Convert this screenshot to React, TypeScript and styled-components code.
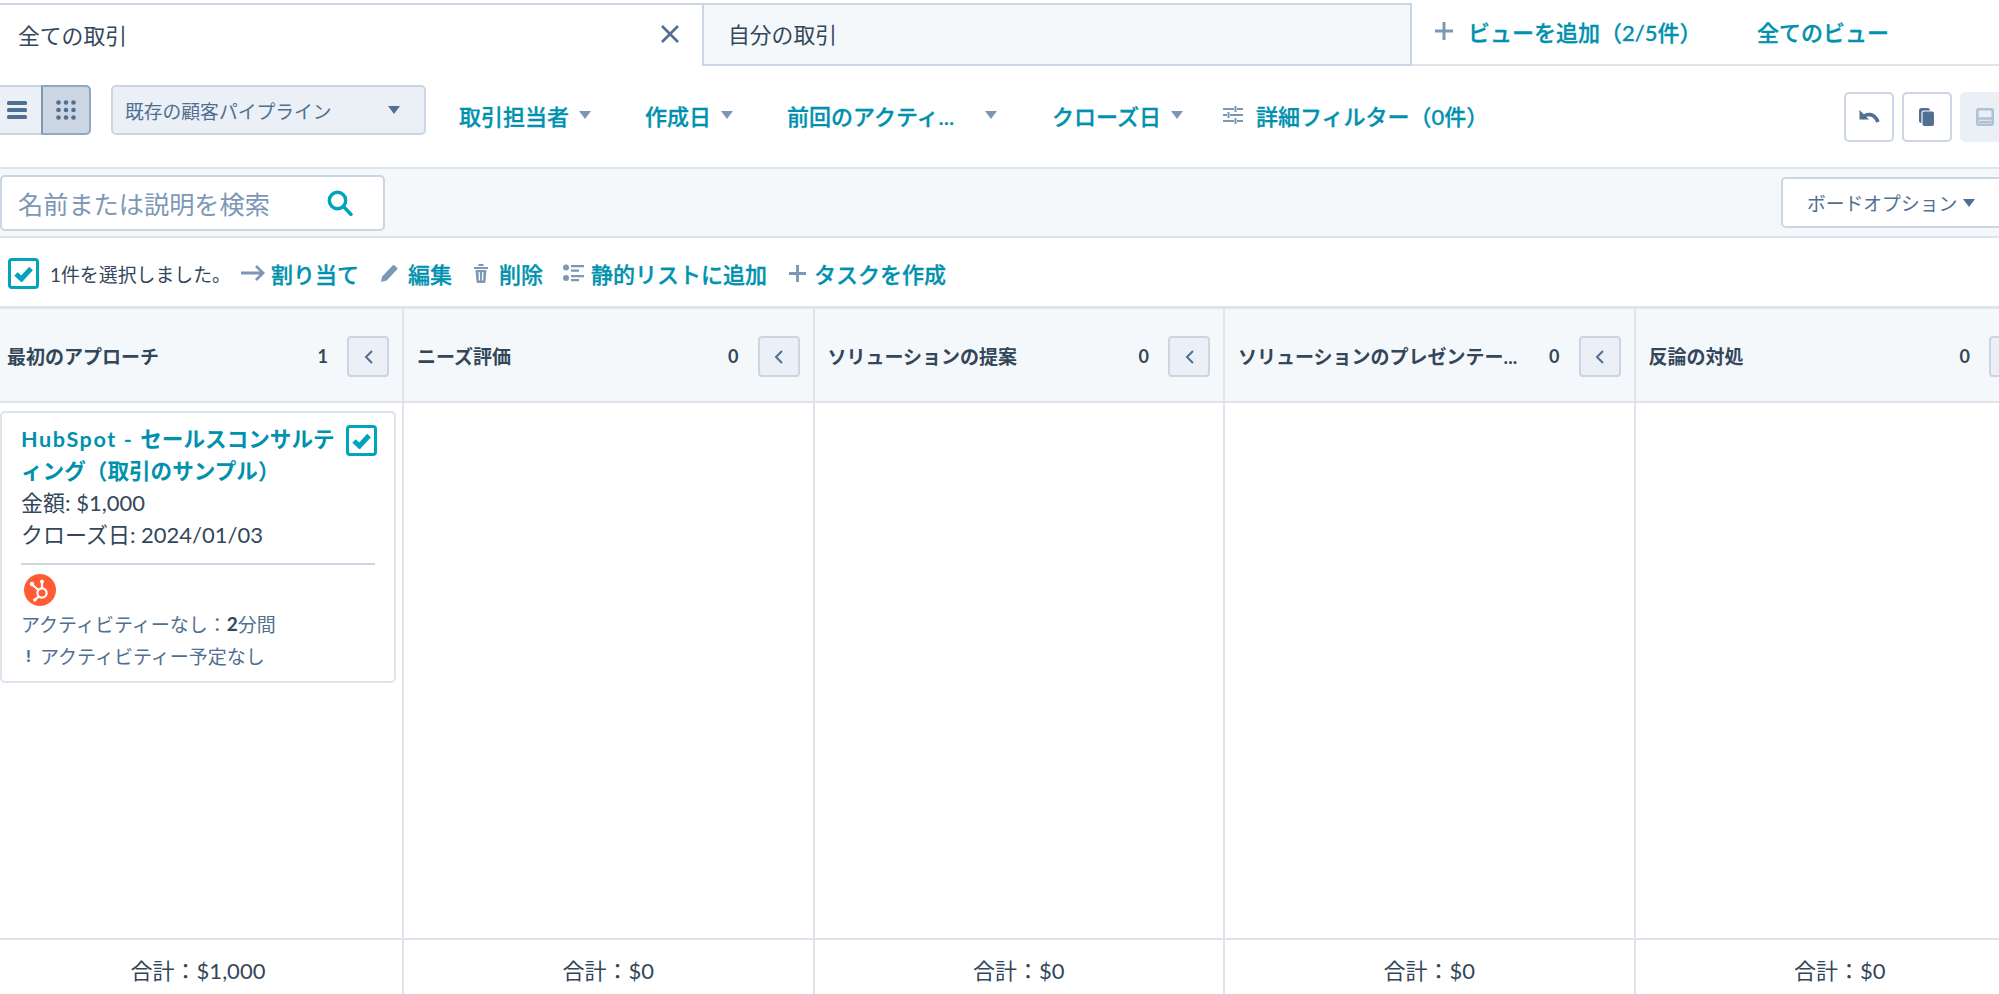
import React from "react";
import styled, { createGlobalStyle } from "styled-components";

const TEAL = "#0091ae";
const INK = "#33475b";
const LINE = "#dfe3eb";
const EDGE = "#cbd6e2";
const SLATE = "#516f90";
const MUTED = "#7c98b6";
const WASH = "#f5f8fa";
const CTRL = "#eaf0f6";

const Global = createGlobalStyle`
  html, body { margin: 0; padding: 0; height: 100%; background: #fff; overflow: hidden; }
  #root { height: 100%; }
  * { box-sizing: border-box; }
  body { font-family: "Lato", "Noto Sans CJK JP", sans-serif; color: ${INK}; }
`;

const Page = styled.div`
  height: 100vh;
  padding-top: 3px;
  display: flex;
  flex-direction: column;
  overflow: hidden;
`;

const TabsRow = styled.div`
  display: flex;
  height: 63px;
  flex: none;
`;

const Tab = styled.div<{ $active?: boolean }>`
  width: ${(p) => (p.$active ? "702px" : "710px")};
  display: flex;
  align-items: center;
  justify-content: space-between;
  padding: 0 16px 3px ${(p) => (p.$active ? "18px" : "24px")};
  font-size: 21.8px;
  color: ${INK};
  background: ${(p) => (p.$active ? "#fff" : WASH)};
  border-top: 2px solid ${EDGE};
  border-left: ${(p) => (p.$active ? "none" : `2px solid ${EDGE}`)};
  border-right: ${(p) => (p.$active ? "none" : `2px solid ${EDGE}`)};
  border-bottom: ${(p) => (p.$active ? "none" : `2px solid ${EDGE}`)};
`;

const TabClose = styled.svg`
  width: 20px;
  height: 20px;
  margin-right: 6px;
  stroke: ${SLATE};
  stroke-width: 2.6;
  fill: none;
`;

const TabActions = styled.div`
  flex: 1;
  display: flex;
  align-items: center;
  padding: 0 0 5px 22px;
  border-bottom: 2px solid ${LINE};
`;

const LinkText = styled.span<{ $size?: number }>`
  color: ${TEAL};
  font-size: ${(p) => p.$size ?? 22}px;
  font-weight: 500;
  white-space: nowrap;
  -webkit-text-stroke: 0.3px ${TEAL};
`;

const AddView = styled.div`
  display: flex;
  align-items: center;
  gap: 14px;
  width: 323px;
`;

const PlusIcon = styled.svg<{ $size?: number }>`
  width: ${(p) => p.$size ?? 20}px;
  height: ${(p) => p.$size ?? 20}px;
  stroke: ${MUTED};
  stroke-width: 3;
  flex: none;
`;

const FilterRow = styled.div`
  display: flex;
  align-items: center;
  height: 103px;
  flex: none;
  border-bottom: 2px solid ${LINE};
`;

const ViewToggle = styled.div`
  display: flex;
  height: 50px;
  margin: 0 20px 13px -9px;
  flex: none;
`;

const ToggleCell = styled.div<{ $on?: boolean }>`
  width: 50px;
  display: flex;
  align-items: center;
  justify-content: center;
  background: ${(p) => (p.$on ? EDGE : CTRL)};
  border: 2px solid ${(p) => (p.$on ? "#8fa8c4" : EDGE)};
  border-left-color: ${(p) => (p.$on ? "#7c98b6" : EDGE)};
  border-right: ${(p) => (p.$on ? undefined : "none")};
  border-radius: ${(p) => (p.$on ? "0 5px 5px 0" : "5px 0 0 5px")};
`;

const PipelineSelect = styled.div`
  width: 315px;
  height: 50px;
  margin: 0 33px 13px 0;
  flex: none;
  display: flex;
  align-items: center;
  justify-content: space-between;
  padding: 0 24px 0 12px;
  font-size: 18.8px;
  color: ${SLATE};
  background: ${CTRL};
  border: 2px solid ${EDGE};
  border-radius: 5px;
`;

const Caret = styled.svg<{ $color?: string }>`
  width: 12px;
  height: 8px;
  flex: none;
  fill: ${(p) => p.$color ?? MUTED};
`;

const FilterButton = styled.div<{ $width?: number; $gap?: number }>`
  width: ${(p) => (p.$width ? `${p.$width}px` : "auto")};
  flex: none;
  display: flex;
  align-items: center;
  gap: ${(p) => p.$gap ?? 10}px;
  margin-bottom: 3px;
`;

const FiltersIcon = styled.svg`
  width: 20px;
  height: 18px;
  flex: none;
  stroke: ${MUTED};
  stroke-width: 2;
  fill: none;
`;

const RightTools = styled.div`
  margin: 1px -11px 0 auto;
  display: flex;
  gap: 8px;
  flex: none;
`;

const ToolButton = styled.div<{ $disabled?: boolean }>`
  width: 50px;
  height: 50px;
  display: flex;
  align-items: center;
  justify-content: center;
  border-radius: 5px;
  background: ${(p) => (p.$disabled ? CTRL : "#fff")};
  border: 2px solid ${(p) => (p.$disabled ? CTRL : EDGE)};
`;

const SearchBand = styled.div`
  height: 69px;
  flex: none;
  display: flex;
  align-items: center;
  justify-content: space-between;
  background: ${WASH};
  border-bottom: 2px solid ${LINE};
`;

const SearchBox = styled.div`
  width: 385px;
  height: 56px;
  display: flex;
  align-items: center;
  justify-content: space-between;
  padding: 0 30px 0 16px;
  font-size: 25.2px;
  color: ${MUTED};
  background: #fff;
  border: 2px solid ${EDGE};
  border-radius: 5px;
`;

const BoardOptions = styled.div`
  width: 240px;
  height: 51px;
  flex: none;
  margin-right: -22px;
  display: flex;
  align-items: center;
  gap: 6px;
  padding-left: 24px;
  font-size: 18.8px;
  color: ${SLATE};
  background: #fff;
  border: 2px solid ${EDGE};
  border-radius: 5px;
`;

const ActionsRow = styled.div`
  height: 71px;
  flex: none;
  display: flex;
  align-items: center;
  padding: 2px 0 0 8px;
  border-bottom: 3px solid ${LINE};
`;

const CheckBox = styled.div<{ $floating?: boolean }>`
  width: 31px;
  height: 31px;
  flex: none;
  display: flex;
  align-items: center;
  justify-content: center;
  background: #fff;
  border: 3px solid #00a4bd;
  border-radius: 4px;
  ${(p) => p.$floating && "position: absolute; top: 12px; right: 17px;"}
`;

const SelectedNote = styled.span`
  width: 202px;
  flex: none;
  padding-left: 11px;
  font-size: 18.9px;
  color: ${INK};
  white-space: nowrap;
`;

const ActionItem = styled.div<{ $gap: number; $after?: number }>`
  display: flex;
  align-items: center;
  gap: ${(p) => p.$gap}px;
  margin-right: ${(p) => p.$after ?? 0}px;
  flex: none;
`;

const Board = styled.div`
  flex: 1;
  min-height: 0;
  display: grid;
  grid-template-columns: 404px repeat(4, 410.5px);
  overflow: hidden;
`;

const Column = styled.section`
  display: flex;
  flex-direction: column;
  min-height: 0;
  border-right: 2px solid ${LINE};
`;

const ColumnHeader = styled.header<{ $first?: boolean }>`
  height: 94px;
  flex: none;
  display: flex;
  align-items: center;
  padding: 3px 13px 0 ${(p) => (p.$first ? 7 : 13)}px;
  background: ${WASH};
  border-bottom: 2px solid ${LINE};
`;

const ColumnTitle = styled.h2`
  flex: 1;
  min-width: 0;
  margin: 0 0 2px;
  font-size: 19px;
  font-weight: 700;
  color: ${INK};
  white-space: nowrap;
`;

const ColumnCount = styled.span`
  margin: 0 19px 2px 0;
  font-size: 18px;
  font-weight: 700;
`;

const CollapseButton = styled.div`
  width: 42px;
  height: 41px;
  flex: none;
  display: flex;
  align-items: center;
  justify-content: center;
  background: ${CTRL};
  border: 2px solid ${EDGE};
  border-radius: 4px;
`;

const ColumnBody = styled.div`
  flex: 1;
  min-height: 0;
  padding-top: 8px;
`;

const ColumnFooter = styled.footer<{ $first?: boolean }>`
  height: 56px;
  flex: none;
  display: flex;
  align-items: center;
  justify-content: center;
  padding: 4px ${(p) => (p.$first ? 6 : 0)}px 0 0;
  font-size: 22px;
  color: ${INK};
  border-top: 2px solid ${LINE};
`;

const DealCard = styled.article`
  position: relative;
  width: 396px;
  height: 272px;
  padding: 11px 19px 0 19px;
  background: #fff;
  border: 2px solid ${LINE};
  border-radius: 5px;
`;

const DealTitle = styled.a`
  display: block;
  width: 322px;
  font-size: 21.6px;
  line-height: 31.5px;
  font-weight: 700;
  color: ${TEAL};
  line-break: anywhere;
`;

const LatinPart = styled.span`
  letter-spacing: 1.6px;
`;

const DealLine = styled.div`
  font-size: 22px;
  line-height: 31.5px;
  color: ${INK};
`;

const DealDivider = styled.hr`
  margin: 13px 0 9px;
  border: 0;
  border-top: 2px solid ${EDGE};
`;

const OwnerAvatar = styled.svg`
  display: block;
  width: 32px;
  height: 32px;
  margin: 0 0 1px 3px;
`;

const MetaLine = styled.div`
  display: flex;
  align-items: center;
  height: 32px;
  font-size: 19px;
  color: ${SLATE};
  white-space: nowrap;
`;

const MetaStrong = styled.strong`
  font-weight: 700;
  color: ${INK};
`;

const Alert = styled.span`
  width: 19px;
  padding-left: 5px;
  font-size: 17px;
  font-weight: 900;
  color: ${SLATE};
`;

const GlyphSvg = styled.svg<{ $w: number; $h: number }>`
  width: ${(p) => p.$w}px;
  height: ${(p) => p.$h}px;
  flex: none;
`;

const CaretGlyph = ({ color }: { color?: string }) => (
  <Caret viewBox="0 0 12 8" $color={color}>
    <path d="M0 0h12L6 8z" />
  </Caret>
);

const Check = () => (
  <GlyphSvg $w={21} $h={17} viewBox="0 0 21 17">
    <path d="M3 9l5.500 5L18 3.500" fill="none" stroke="#00a4bd" strokeWidth="5" />
  </GlyphSvg>
);

const Plus = ({ size }: { size?: number }) => (
  <PlusIcon $size={size} viewBox="0 0 20 20">
    <path d="M10 1v18M1 10h18" />
  </PlusIcon>
);

const columns = [
  { title: "最初のアプローチ", count: 1, total: "$1,000" },
  { title: "ニーズ評価", count: 0, total: "$0" },
  { title: "ソリューションの提案", count: 0, total: "$0" },
  { title: "ソリューションのプレゼンテー...", count: 0, total: "$0" },
  { title: "反論の対処", count: 0, total: "$0" },
];

const filters = [
  { label: "取引担当者", width: 186 },
  { label: "作成日", width: 142 },
  { label: "前回のアクティ...", width: 265, gap: 31 },
  { label: "クローズ日", width: 171 },
];

export default function App() {
  return (
    <Page>
      <Global />
      <TabsRow>
        <Tab $active>
          全ての取引
          <TabClose viewBox="0 0 20 20">
            <path d="M2 2l16 16M18 2L2 18" />
          </TabClose>
        </Tab>
        <Tab>自分の取引</Tab>
        <TabActions>
          <AddView>
            <Plus />
            <LinkText>ビューを追加（2/5件）</LinkText>
          </AddView>
          <LinkText>全てのビュー</LinkText>
        </TabActions>
      </TabsRow>

      <FilterRow>
        <ViewToggle>
          <ToggleCell>
            <GlyphSvg $w={20} $h={18} viewBox="0 0 20 18" fill={SLATE}>
              <rect width="20" height="4" y="0" rx="1.5" />
              <rect width="20" height="4" y="7" rx="1.5" />
              <rect width="20" height="4" y="14" rx="1.5" />
            </GlyphSvg>
          </ToggleCell>
          <ToggleCell $on>
            <GlyphSvg $w={20} $h={20} viewBox="0 0 20 20" fill={SLATE}>
              {[2.5, 10, 17.5].flatMap((y) =>
                [2.5, 10, 17.5].map((x) => <circle key={`${x}-${y}`} cx={x} cy={y} r="2.3" />)
              )}
            </GlyphSvg>
          </ToggleCell>
        </ViewToggle>
        <PipelineSelect>
          既存の顧客パイプライン
          <CaretGlyph color={SLATE} />
        </PipelineSelect>
        {filters.map((f) => (
          <FilterButton key={f.label} $width={f.width} $gap={f.gap}>
            <LinkText>{f.label}</LinkText>
            <CaretGlyph />
          </FilterButton>
        ))}
        <FilterButton $gap={13}>
          <FiltersIcon viewBox="0 0 20 18">
            <path d="M0 3h11M14 3h6M12.500 0v6M0 9h4M7 9h13M5.500 6v6M0 15h11M14 15h6M12.500 12v6" />
          </FiltersIcon>
          <LinkText>詳細フィルター（0件）</LinkText>
        </FilterButton>
        <RightTools>
          <ToolButton>
            <GlyphSvg $w={22} $h={14} viewBox="0 0 22 14" fill="none">
              <path d="M1.500 0v9.500H11" fill={SLATE} />
              <path d="M4 8.500C8 3 16 2.500 20 12" stroke={SLATE} strokeWidth="3.600" />
            </GlyphSvg>
          </ToolButton>
          <ToolButton>
            <GlyphSvg $w={16} $h={19} viewBox="0 0 16 19">
              <rect x="0" y="0" width="11" height="15" rx="2.500" fill={SLATE} />
              <rect x="3" y="3" width="12.500" height="15.500" rx="2.200" fill={SLATE} stroke="#fff" strokeWidth="1.100" />
            </GlyphSvg>
          </ToolButton>
          <ToolButton $disabled>
            <GlyphSvg $w={18} $h={18} viewBox="0 0 18 18" fill="none" stroke="#b0c1d4" strokeWidth="2.600">
              <rect x="1.300" y="1.300" width="15.400" height="15.400" rx="1.500" />
              <path d="M1 10.500h16M3 14h12" />
            </GlyphSvg>
          </ToolButton>
        </RightTools>
      </FilterRow>

      <SearchBand>
        <SearchBox>
          名前または説明を検索
          <GlyphSvg $w={26} $h={26} viewBox="0 0 26 26" fill="none" stroke="#00a4bd" strokeWidth="3.400">
            <circle cx="10.500" cy="10.500" r="8.200" />
            <path d="M16.500 16.500L24 24.500" strokeLinecap="round" />
          </GlyphSvg>
        </SearchBox>
        <BoardOptions>
          ボードオプション
          <CaretGlyph color={SLATE} />
        </BoardOptions>
      </SearchBand>

      <ActionsRow>
        <CheckBox>
          <Check />
        </CheckBox>
        <SelectedNote>1件を選択しました。</SelectedNote>
        <ActionItem $gap={6} $after={22}>
          <GlyphSvg $w={24} $h={16} viewBox="0 0 24 16" fill="none" stroke={MUTED} strokeWidth="2.800">
            <path d="M0 8h22M15 1l7 7-7 7" />
          </GlyphSvg>
          <LinkText>割り当て</LinkText>
        </ActionItem>
        <ActionItem $gap={10} $after={22}>
          <GlyphSvg $w={17} $h={18} viewBox="0 0 17 18" fill={MUTED}>
            <path d="M0 18l1.200-5.500L11.500 1.500a1.600 1.600 0 0 1 2.200-.1l2.200 2a1.600 1.600 0 0 1 .1 2.200L5.700 16.400z" />
          </GlyphSvg>
          <LinkText>編集</LinkText>
        </ActionItem>
        <ActionItem $gap={11} $after={20}>
          <GlyphSvg $w={14} $h={19} viewBox="0 0 14 19" fill={MUTED}>
            <path d="M0 3h14v2H0zM4.500 0h5v2h-5z" />
            <path d="M1.500 6h11l-1 11.500a1.500 1.500 0 0 1-1.500 1.500H4a1.500 1.500 0 0 1-1.500-1.500zM4.500 8l.4 8.500h1.200L5.800 8zm3.700 0l-.3 8.500h1.200L9.500 8z" fillRule="evenodd" />
          </GlyphSvg>
          <LinkText>削除</LinkText>
        </ActionItem>
        <ActionItem $gap={7} $after={21}>
          <GlyphSvg $w={21} $h={18} viewBox="0 0 21 18" fill={MUTED}>
            <circle cx="3" cy="3.500" r="3" />
            <circle cx="3" cy="14" r="3" />
            <path d="M8 1h13v2.200H8zM8 5.500h8v2.200H8zM8 11h13v2.200H8zM8 15h8v2.200H8z" />
          </GlyphSvg>
          <LinkText>静的リストに追加</LinkText>
        </ActionItem>
        <ActionItem $gap={7}>
          <Plus size={19} />
          <LinkText>タスクを作成</LinkText>
        </ActionItem>
      </ActionsRow>

      <Board>
        {columns.map((c, i) => (
          <Column key={c.title}>
            <ColumnHeader $first={i === 0}>
              <ColumnTitle>{c.title}</ColumnTitle>
              <ColumnCount>{c.count}</ColumnCount>
              <CollapseButton>
                <GlyphSvg $w={9} $h={14} viewBox="0 0 9 14" fill="none" stroke={SLATE} strokeWidth="2">
                  <path d="M8 1L2 7l6 6" />
                </GlyphSvg>
              </CollapseButton>
            </ColumnHeader>
            <ColumnBody>
              {i === 0 && (
                <DealCard>
                  <CheckBox $floating>
                    <Check />
                  </CheckBox>
                  <DealTitle>
                    <LatinPart>HubSpot - </LatinPart>セールスコンサルティング（取引のサンプル）
                  </DealTitle>
                  <DealLine>金額: $1,000</DealLine>
                  <DealLine>クローズ日: 2024/01/03</DealLine>
                  <DealDivider />
                  <OwnerAvatar viewBox="0 0 32 32">
                    <circle cx="16" cy="16" r="16" fill="#ff5c35" />
                    <g fill="none" stroke="#fff" strokeWidth="2.200">
                      <circle cx="18" cy="19" r="4.600" />
                      <path d="M18 14V8.500M14.500 16L8.500 11M14.800 22.500l-3.500 3" />
                    </g>
                    <circle cx="18" cy="7.500" r="2" fill="#fff" />
                    <circle cx="8" cy="10" r="2.200" fill="#fff" />
                    <circle cx="10.800" cy="26" r="1.700" fill="#fff" />
                  </OwnerAvatar>
                  <MetaLine>
                    アクティビティーなし：<MetaStrong>2</MetaStrong>分間
                  </MetaLine>
                  <MetaLine>
                    <Alert>!</Alert>アクティビティー予定なし
                  </MetaLine>
                </DealCard>
              )}
            </ColumnBody>
            <ColumnFooter $first={i === 0}>合計：{c.total}</ColumnFooter>
          </Column>
        ))}
      </Board>
    </Page>
  );
}
